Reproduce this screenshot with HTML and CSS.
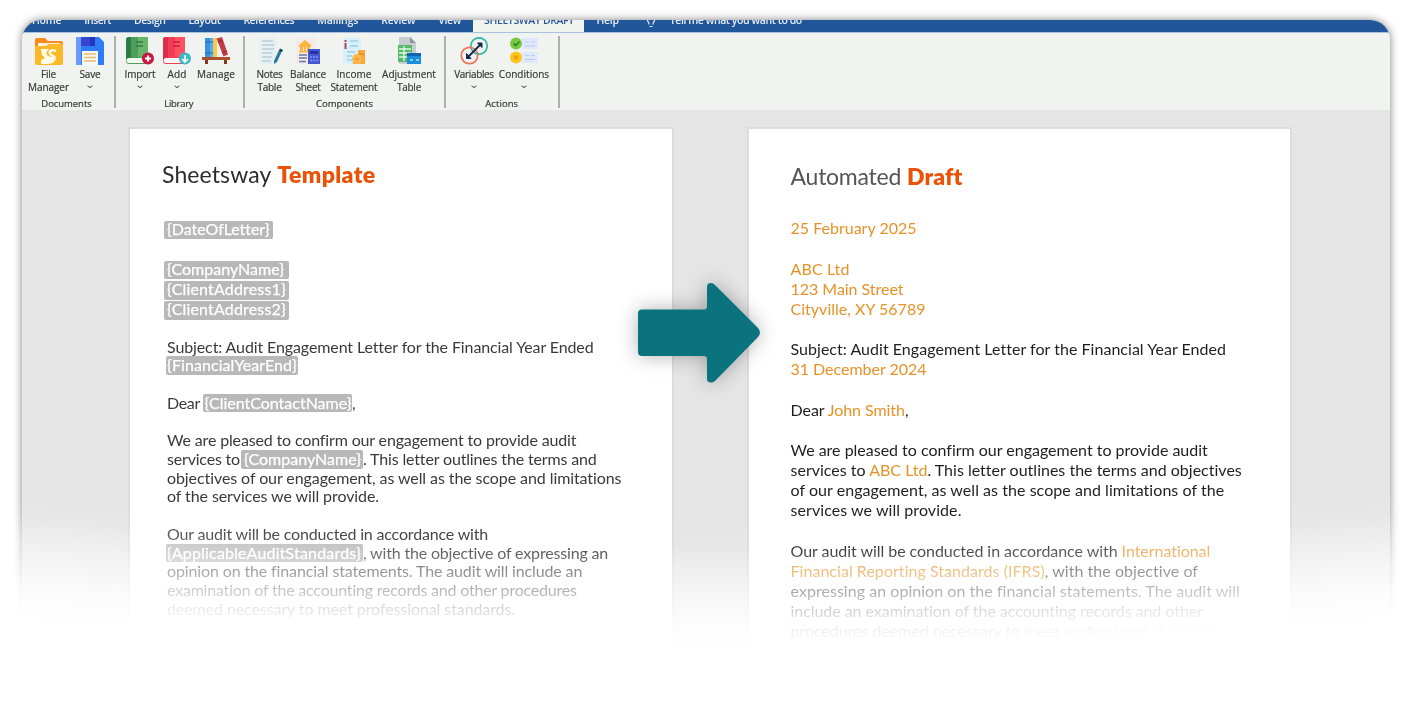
FILE: index.html
```html
<!DOCTYPE html>
<html lang="en">
<head>
<meta charset="utf-8">
<title>Sheetsway Draft</title>
<link rel="stylesheet" href="styles.css">
</head>
<body>
<main class="stage">
<div class="fade">
<section class="window">
  <nav class="tabs">
    <span class="tab"><b class="r1">Home</b></span>
    <span class="tab"><b class="r2">Insert</b></span>
    <span class="tab"><b class="r3">Design</b></span>
    <span class="tab"><b class="r4">Layout</b></span>
    <span class="tab"><b class="r5">References</b></span>
    <span class="tab"><b class="r6">Mailings</b></span>
    <span class="tab"><b class="r7">Review</b></span>
    <span class="tab"><b class="r8">View</b></span>
    <span class="tab active"><b class="r9">SHEETSWAY DRAFT</b></span>
    <span class="tab"><b class="r10">Help</b></span>
    <svg class="bulb" width="10" height="14" viewBox="0 0 10 14"><path d="M3.200 10.500C3 8 1 7 1 4.500a4 4 0 0 1 8 0C9 7 7 8 6.800 10.500M3.500 12.500h3" fill="none" stroke="#dfe9f5" stroke-width="1.200"/></svg>
    <span class="tab"><b class="r11">Tell me what you want to do</b></span>
  </nav>
  <div class="ribbon">
    <div class="group documents">
      <div class="tools">
        <div class="tool"><svg class="icon" viewBox="0 0 28 28"><path d="M0 3a2 2 0 0 1 2-2h8l3 3h13a2 2 0 0 1 2 2v20H0z" fill="#f98a1c"/><path d="M3 6h22v6H3z" fill="#fff3e0"/><path d="M0 9h11l3-2h14v19a2 2 0 0 1-2 2H2a2 2 0 0 1-2-2z" fill="#fdb827"/><path d="M6 12h8l-3 4 2 3 4 1 4 2-3 4-5 1H6v-4l4-2-3-3z" fill="#fffbe8"/><path d="M21 14c-4-2-7 0-6 2.500s5 2 5 5" fill="none" stroke="#fffbe8" stroke-width="2.500"/></svg><span class="name"><b class="r12">File</b><b class="r13">Manager</b></span></div>
        <div class="tool"><svg class="icon" viewBox="0 0 28 28"><path d="M0 0h23l5 5v23H0z" fill="#2f7df6"/><path d="M0 0h5v28H0z" fill="#6a9cff"/><path d="M5 0h14v9H5z" fill="#3544d4"/><path d="M14 0h5v9h-5z" fill="#2635b8"/><path d="M6 14h16v14H6z" fill="#f4f7fb"/><path d="M8 17h12M8 20.500h12M8 24h12" stroke="#e9bf63" stroke-width="1.500"/></svg><span class="name"><b class="r14">Save</b><i class="chev"></i></span></div>
      </div>
      <span class="caption"><b class="r15">Documents</b></span>
    </div>
    <div class="group library">
      <div class="tools">
        <div class="tool"><svg class="icon" viewBox="0 0 28 28"><path d="M0 3a3 3 0 0 1 3-3h19v27H3a3 3 0 0 1-3-3z" fill="#4c9f5b"/><path d="M0 3a3 3 0 0 1 3-3h2v22H0z" fill="#2f7d46"/><path d="M12 0h10v20H12z" fill="#68b56b"/><path d="M10 5h7M10 9h7" stroke="#2f7d46" stroke-width="1.300"/><path d="M3 21h19v5H3a2.500 2.500 0 0 1 0-5z" fill="#f5f7f2"/><circle cx="22" cy="21.500" r="6" fill="#c9183f"/><path d="M22 18.500v6M19 21.500h6" stroke="#fff" stroke-width="2"/></svg><span class="name"><b class="r16">Import</b><i class="chev"></i></span></div>
        <div class="tool"><svg class="icon" viewBox="0 0 28 28"><path d="M0 3a3 3 0 0 1 3-3h19v27H3a3 3 0 0 1-3-3z" fill="#f23b55"/><path d="M0 3a3 3 0 0 1 3-3h2v22H0z" fill="#dc2d48"/><path d="M12 0h10v20H12z" fill="#ff5265"/><path d="M10 5h7M10 9h7" stroke="#c81e3c" stroke-width="1.300"/><path d="M3 21h19v5H3a2.500 2.500 0 0 1 0-5z" fill="#f5f7f2"/><circle cx="22" cy="21.500" r="6" fill="#37b9c9"/><path d="M22 18v6M19 22l3 3 3-3" stroke="#fff" stroke-width="1.600" fill="none"/></svg><span class="name"><b class="r17">Add</b><i class="chev"></i></span></div>
        <div class="tool"><svg class="icon" viewBox="0 0 28 28"><path d="M3 1h5v19H3z" fill="#3d8fe0"/><path d="M8 1h3v19H8z" fill="#56b0ee"/><path d="M11 1h4v19h-4z" fill="#f7c948"/><path d="M3 5h8M3 16h8" stroke="#1d67b5"/><path d="M14.500 1.500l5.500-1.500 6 17.500-4.500 2z" fill="#c53a44"/><path d="M16 5l5-1.500M20 16l5-2" stroke="#8e2431"/><path d="M0 20h28v3H0z" fill="#a9502c"/><path d="M3 23h3v4H3zM22 23h3v4h-3z" fill="#86391f"/></svg><span class="name"><b class="r18">Manage</b></span></div>
      </div>
      <span class="caption"><b class="r19">Library</b></span>
    </div>
    <div class="group components">
      <div class="tools">
        <div class="tool"><svg class="icon" viewBox="0 0 28 28"><path d="M3 1h17v26H3z" fill="#e6f0f2"/><path d="M6 4h11M6 8h12M6 12h12M6 16h10M6 20h10M6 24h9" stroke="#9dbfc9" stroke-width="1.100"/><path d="M26 14l-5 11-3 2v-3l5-11z" fill="#277b9b"/><path d="M23.500 12.500l3 1.500" stroke="#163c5c" stroke-width="2"/></svg><span class="name"><b class="r20">Notes</b><b class="r21">Table</b></span></div>
        <div class="tool"><svg class="icon" viewBox="0 0 28 28"><path d="M2 1h20v26H2z" fill="#f5e9ea"/><path d="M5 8l6-5 6 5v2H5zM6 10h3v5H6zM10 10h2v5h-2zM13 10h3v5h-3zM5 14h12v1.500H5z" fill="#fbb53c"/><path d="M5 18h8M5 21h8M5 24.500h7" stroke="#6678a3" stroke-width="1.300"/><path d="M14 12h12v15H14z" fill="#4457d5"/><path d="M16 14h8v3h-8z" fill="#293699"/><path d="M16 20h8M16 23.500h8" stroke="#7c93f5" stroke-width="1.500" stroke-dasharray="2 1"/></svg><span class="name"><b class="r22">Balance</b><b class="r23">Sheet</b></span></div>
        <div class="tool"><svg class="icon" viewBox="0 0 28 28"><path d="M3 1h18v26H3z" fill="#d9f0fa"/><path d="M5.500 3v2M5.500 6v6" stroke="#b0405a" stroke-width="2"/><path d="M10 4h8M10 9h8M7 15h8M7 19h5M7 23h5" stroke="#9ccfe4" stroke-width="1.300"/><path d="M18 13h7v14H13v-7h5z" fill="#f9a938"/><circle cx="17" cy="22" r="5" fill="#fcb84a"/><path d="M15 22h4M19 17h5" stroke="#e27a24"/></svg><span class="name"><b class="r24">Income</b><b class="r25">Statement</b></span></div>
        <div class="tool"><svg class="icon" viewBox="0 0 28 28"><path d="M4 0h11l6 6v21H4z" fill="#c7cdd0"/><path d="M15 0l6 6h-6z" fill="#8f989d"/><path d="M3 8h14v17H3z" fill="#57b96b"/><path d="M4 12h12M4 16h12M4 20h12M9 9v15" stroke="#e5f6e8" stroke-width="1.300"/><path d="M12 16h14v11H12z" fill="#1b8ee0"/><path d="M12 16h14v3H12z" fill="#1263b0"/><path d="M15 23h3M21 23h3" stroke="#82d0fa" stroke-width="2"/></svg><span class="name"><b class="r26">Adjustment</b><b class="r27">Table</b></span></div>
      </div>
      <span class="caption"><b class="r28">Components</b></span>
    </div>
    <div class="group actions">
      <div class="tools">
        <div class="tool"><svg class="icon" viewBox="0 0 28 28" fill="none"><circle cx="19" cy="9" r="8.200" stroke="#35b8a4" stroke-width="1.700"/><circle cx="9.500" cy="18.500" r="8.200" stroke="#f2705c" stroke-width="1.700"/><path d="M8 20L21 7" stroke="#17274f" stroke-width="1.800"/><path d="M17.500 6H22v4.500zM6.500 16.500V21.500H11z" fill="#17274f" stroke="#17274f"/></svg><span class="name"><b class="r29">Variables</b><i class="chev"></i></span></div>
        <div class="tool"><svg class="icon" viewBox="0 0 28 28" fill="none"><path d="M12 1h16v11H12zM12 15h16v11H12z" fill="#dfe9fb"/><path d="M15 5h4M21 5h4M15 9h10M15 18.500h4M21 18.500h4M15 22.500h10" stroke="#b8cbf0" stroke-width="1.200"/><circle cx="6" cy="6.500" r="6" fill="#79c83f"/><path d="M3.500 6.500l2.200 2 3.800-4" stroke="#2b8c35" stroke-width="1.700"/><circle cx="6" cy="20.500" r="6" fill="#fdc419"/><path d="M4 18.500l4 4M8 18.500l-4 4" stroke="#ef9613" stroke-width="1.500"/></svg><span class="name"><b class="r30">Conditions</b><i class="chev"></i></span></div>
      </div>
      <span class="caption"><b class="r31">Actions</b></span>
    </div>
  </div>
  <div class="desk">
    <article class="page template">
      <h1><span class="t1">Sheetsway</span> <strong class="t2">Template</strong></h1>
      <div class="fields">
        <p><span class="chip c1"><b class="k1">{DateOfLetter}</b></span></p>
        <p></p>
        <p><span class="chip c2"><b class="k2">{CompanyName}</b></span></p>
        <p><span class="chip c2"><b class="k3">{ClientAddress1}</b></span></p>
        <p><span class="chip c2"><b class="k4">{ClientAddress2}</b></span></p>
      </div>
      <div class="letter">
        <p><b class="k5">Subject: Audit Engagement Letter for the Financial Year Ended</b></p>
        <p><span class="chip c3"><b class="k6">{FinancialYearEnd}</b></span></p>
        <p></p>
        <p><b class="k7">Dear</b><span class="chip c4"><b class="k8">{ClientContactName}</b></span><b>,</b></p>
        <p></p>
        <p><b class="k9">We are pleased to confirm our engagement to provide audit</b></p>
        <p><b class="k10">services to</b><span class="chip c5"><b class="k11">{CompanyName}</b></span><b class="k12">. This letter outlines the terms and</b></p>
        <p><b class="k13">objectives of our engagement, as well as the scope and limitations</b></p>
        <p><b class="k14">of the services we will provide.</b></p>
        <p></p>
        <p><b class="k15">Our audit will be conducted in accordance with</b></p>
        <p><span class="chip c6"><b class="k16">{ApplicableAuditStandards}</b></span><b class="k17">, with the objective of expressing an</b></p>
        <p><b class="k18">opinion on the financial statements. The audit will include an</b></p>
        <p><b class="k19">examination of the accounting records and other procedures</b></p>
        <p><b class="k20">deemed necessary to meet professional standards.</b></p>
      </div>
    </article>
    <article class="page draft">
      <h1><span class="t3">Automated</span> <strong class="t4">Draft</strong></h1>
      <div class="letter">
        <p><em class="k21">25 February 2025</em></p>
        <p></p>
        <p><em class="k22">ABC Ltd</em></p>
        <p><em class="k23">123 Main Street</em></p>
        <p><em class="k24">Cityville, XY 56789</em></p>
        <p></p>
        <p><b class="k25">Subject: Audit Engagement Letter for the Financial Year Ended</b></p>
        <p><em class="k26">31 December 2024</em></p>
        <p></p>
        <p><b class="k27">Dear <em>John Smith</em>,</b></p>
        <p></p>
        <p><b class="k28">We are pleased to confirm our engagement to provide audit</b></p>
        <p><b class="k29">services to <em>ABC Ltd</em>. This letter outlines the terms and objectives</b></p>
        <p><b class="k30">of our engagement, as well as the scope and limitations of the</b></p>
        <p><b class="k31">services we will provide.</b></p>
        <p></p>
        <p><b class="k32">Our audit will be conducted in accordance with <em>International</em></b></p>
        <p><b class="k33"><em>Financial Reporting Standards (IFRS)</em>, with the objective of</b></p>
        <p><b class="k34">expressing an opinion on the financial statements. The audit will</b></p>
        <p><b class="k35">include an examination of the accounting records and other</b></p>
        <p><b class="k36">procedures deemed necessary to meet professional standards.</b></p>
      </div>
    </article>
  </div>
</section>
</div>
<svg class="arrow" width="122" height="100" viewBox="0 0 122 100"><path d="M4 26.500H66Q69 26.500 69 23.500V4Q69 0 73 0Q75 0 77 2L120 45Q124 49.700 120 54L77 98Q75 99.500 73 99.500Q69 99.500 69 96V76Q69 73 66 73H4Q0 73 0 69V30.500Q0 26.500 4 26.500Z" fill="#0b737e"/></svg>
</main>
</body>
</html>
```
FILE: styles.css
```css
* { box-sizing: border-box; }
body { margin: 0; background: #fff; font-family: Lato, "Open Sans", sans-serif; }
b { font-weight: inherit; }
em { font-style: normal; color: #e79228; }
.stage { position: relative; width: 1412px; height: 720px; overflow: hidden; }

/* The window dissolves towards the bottom, slightly earlier at both sides. */
.fade {
  height: 720px;
  padding: 20px 22px 0;
  -webkit-mask-image: radial-gradient(ellipse 2400px 650px at 706px 0, #000 80%, rgba(0,0,0,.93) 84%, rgba(0,0,0,.6) 88%, rgba(0,0,0,.33) 92%, rgba(0,0,0,.12) 95.500%, transparent 99.500%);
  mask-image: radial-gradient(ellipse 2400px 650px at 706px 0, #000 80%, rgba(0,0,0,.93) 84%, rgba(0,0,0,.6) 88%, rgba(0,0,0,.33) 92%, rgba(0,0,0,.12) 95.500%, transparent 99.500%);
}
.window { height: 700px; border-radius: 20px 20px 0 0; overflow: hidden; background: #e5e5e5; box-shadow: 0 0 9px rgba(0,0,0,.5); }

/* Tab strip */
.tabs { display: flex; height: 13px; overflow: hidden; background: #22569a; border-bottom: 1px solid #a9c2de; color: #e4ecf6; font: 600 10.500px/14px "Open Sans", sans-serif; padding-left: 10px; }
.tab { flex: none; height: 13px; margin-right: 23.500px; white-space: nowrap; }
.tab b { display: block; margin-top: -7px; }
.tab.active { margin: 0 12px 0 -11px; padding: 0 11px; background: #f0f3f0; color: #2b579a; }
.bulb { flex: none; margin: -6px 14px 0 4px; }
.tabs b { margin-right: -.04em; }

/* Ribbon */
.ribbon { display: flex; height: 77px; background: #f0f3ef; color: #333; font: 500 10px/13px "Open Sans", sans-serif; -webkit-text-stroke: .2px #444; }
.group { display: flex; flex-direction: column; justify-content: space-between; height: 72px; margin-top: 3px; border-right: 2px solid #aeb0ae; }
.documents { width: 93.500px; padding-left: 4.500px; }
.library { width: 129px; padding-left: 5.500px; }
.components { width: 201.500px; padding-left: 6.500px; }
.actions { width: 113.500px; padding-left: 3px; }
.tools { display: flex; }
.tool { display: flex; flex-direction: column; align-items: center; flex: none; width: 44px; }
.documents .tool:nth-child(2) { width: 39px; }
.library .tool { width: 38px; }
.library .tool:nth-child(2) { width: 36px; }
.library .tool:nth-child(3) { width: 42px; }
.components .tool { width: 37px; }
.components .tool:nth-child(2) { width: 40px; }
.components .tool:nth-child(3) { width: 52px; }
.components .tool:nth-child(4) { width: 58px; }
.actions .tool { width: 50px; }
.icon { width: 28px; height: 28px; margin-top: 1px; }
.name { display: flex; flex-direction: column; align-items: center; margin-top: 3px; white-space: nowrap; }
.chev { width: 4px; height: 4px; margin-top: 3px; border: solid #444; border-width: 0 1.500px 1.500px 0; transform: scaleY(.7) rotate(45deg); }
.caption { text-align: center; font-size: 9.500px; line-height: 12px; margin: 0 6px -2px 0; }
.documents .caption { margin-right: 7px; }
.actions .caption { margin-right: 3px; }

/* Documents */
.desk { display: flex; gap: 73px; height: 610px; padding: 17px 0 0 106px; background: #e5e5e5; }
.page { flex: none; width: 546px; border: 2px solid #dcdcdc; background: #fff; border-bottom: 0; color: #3a3a3a; font-size: 16px; }
.template { padding-left: 32px; }
.draft { width: 544.500px; padding-left: 41.500px; color: #1f1f1f; }
h1 { margin: 0; font-size: 23px; line-height: 30px; font-weight: 400; white-space: nowrap; color: #2c2c2c; }
h1 strong { color: #e95207; font-weight: 800; }
.template h1 { padding-top: 30px; }
.draft h1 { padding-top: 32px; color: #555; }
p { display: flex; margin: 0; white-space: pre; }
.fields { padding: 31.500px 0 0 2px; }
.fields p { height: 20.200px; line-height: 18px; }
.template .letter { padding: 16.300px 0 0 5px; }
.template .letter p { height: 18.730px; line-height: 18.730px; }
.draft .letter { padding-top: 27.200px; }
.draft .letter p { height: 20.170px; line-height: 20.170px; }
.chip { flex: none; height: 18.500px; padding-left: 3px; border-radius: 2px; background: #b8b8b8; color: #fff; line-height: 16px; -webkit-text-stroke: .25px #fff; }
.letter .chip { line-height: 17.500px; }
.c1 { width: 108.500px; }
.c2 { width: 125px; }
.c3 { width: 132px; margin-left: -1px; padding-left: 1px; }
.c4 { width: 149.500px; margin-left: 2.500px; padding-left: 2px; }
.c5 { width: 122px; margin-left: 1px; }
.c6 { width: 197px; margin-left: -1px; padding-left: 1px; }
.arrow { position: absolute; left: 638px; top: 283px; overflow: visible; filter: drop-shadow(0 0 10px rgba(0,0,0,.3)); }

/* Tracking of the ribbon labels */
.r1 { letter-spacing: -.3px; }
.r2, .r3 { letter-spacing: -.5px; }
.r4 { letter-spacing: -.46px; }
.r5 { letter-spacing: -.55px; }
.r6 { letter-spacing: -.16px; }
.r7 { letter-spacing: -.33px; }
.r8 { letter-spacing: -.35px; }
.r9 { letter-spacing: -.4px; }
.r10 { letter-spacing: -.3px; }
.r11 { letter-spacing: -.42px; }
.r12 { letter-spacing: -.2px; }
.r13 { letter-spacing: -.07px; }
.r14 { letter-spacing: -.17px; }
.r15 { letter-spacing: -.05px; }
.r16 { letter-spacing: -.15px; }
.r17 { letter-spacing: .13px; }
.r18 { letter-spacing: .1px; }
.r19, .r20 { letter-spacing: -.29px; }
.r21, .r27 { letter-spacing: -.27px; }
.r22 { letter-spacing: -.1px; }
.r23 { letter-spacing: -.29px; }
.r24 { letter-spacing: .05px; }
.r25 { letter-spacing: -.16px; }
.r26 { letter-spacing: -.02px; }
.r29 { letter-spacing: -.36px; }
.r30 { letter-spacing: .02px; }
.r31 { letter-spacing: .07px; }

/* Tracking of the titles and letter lines */
.t1 { letter-spacing: .11px; }
.t2 { letter-spacing: .36px; }
.t3 { letter-spacing: -.24px; }
.t4 { letter-spacing: .14px; }
.k1 { letter-spacing: -.048px; }
.k2, .k11 { letter-spacing: .011px; }
.k3, .k4 { letter-spacing: .172px; }
.k5 { letter-spacing: -.114px; }
.k6 { letter-spacing: .074px; }
.k7 { letter-spacing: -.32px; }
.k8 { letter-spacing: -.008px; }
.k9 { letter-spacing: -.15px; }
.k10 { letter-spacing: -.185px; }
.k12 { letter-spacing: -.154px; }
.k13, .k14 { letter-spacing: -.086px; }
.k15 { letter-spacing: -.177px; }
.k16 { letter-spacing: .177px; }
.k17 { letter-spacing: -.17px; }
.k18 { letter-spacing: -.129px; }
.k19 { letter-spacing: -.205px; }
.k20 { letter-spacing: -.092px; }
.k22 { letter-spacing: .118px; }
.k23 { letter-spacing: -.033px; }
.k24 { letter-spacing: .022px; }
.k25 { letter-spacing: .034px; }
.k26 { letter-spacing: -.023px; }
.k27 { letter-spacing: -.056px; }
.k28 { letter-spacing: -.01px; }
.k29 { letter-spacing: .006px; }
.k30 { letter-spacing: .05px; }
.k31 { letter-spacing: .069px; }
.k32 { letter-spacing: -.046px; }
.k33, .k34 { letter-spacing: .038px; }
.k35 { letter-spacing: -.049px; }
.k36 { letter-spacing: -.03px; }
```
